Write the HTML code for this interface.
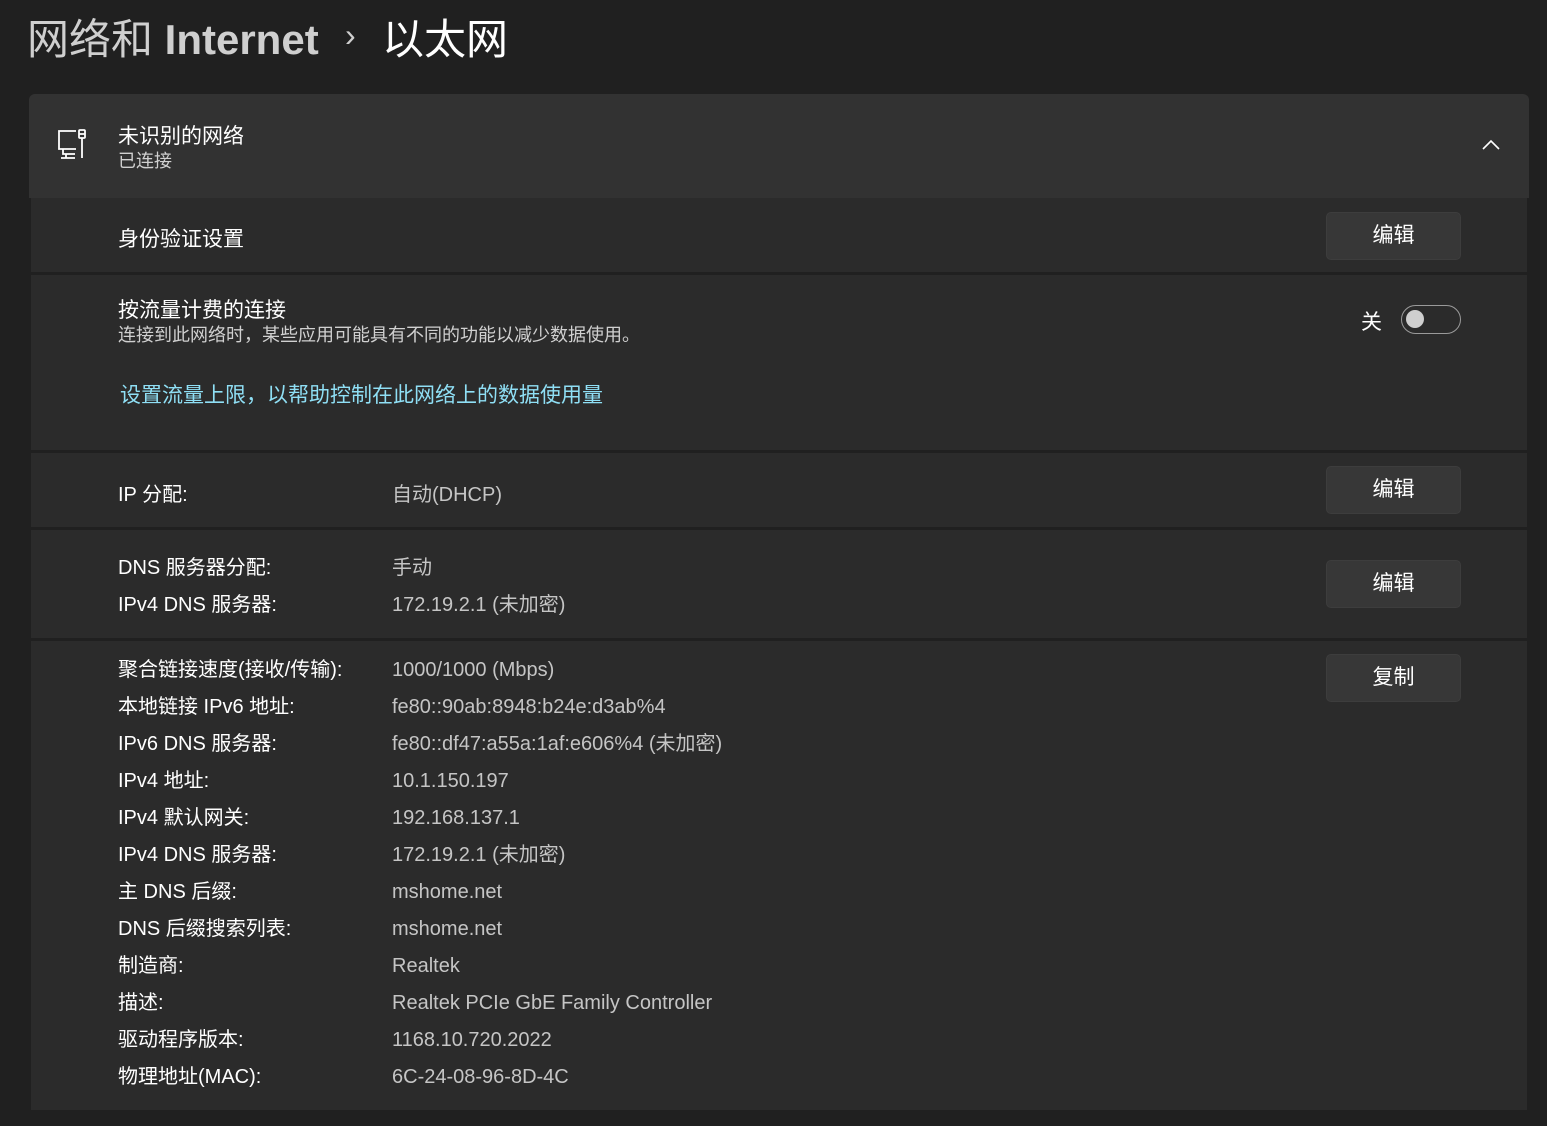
<!DOCTYPE html>
<html><head><meta charset="utf-8"><style>
*{margin:0;padding:0;box-sizing:border-box}
body{width:1547px;height:1126px;background:#202020;font-family:"Liberation Sans","Noto Sans CJK SC",sans-serif;color:#fff;position:relative;overflow:hidden}
.a{position:absolute;white-space:nowrap}
.sec{position:absolute;left:31px;width:1496px;background:#2b2b2b}
.btn{position:absolute;left:1326px;width:135px;height:48px;background:#373737;border:1px solid #3d3d3d;border-radius:5px;font-size:21px;text-align:center;line-height:46px}
.l{font-size:20px;color:#fff}
.v{font-size:20px;color:#c5c5c5}
.c{font-size:21px}
</style></head><body>
<div class="a" style="left:27px;top:14px;font-size:42px;color:#cfcfcf;line-height:52px">网络和 <span style="font-weight:bold">Internet</span></div>
<div class="a" style="left:345px;top:17px;font-size:32px;color:#cfcfcf">›</div>
<div class="a" style="left:382px;top:14px;font-size:42px;color:#fff;line-height:52px">以太网</div>

<div class="a" style="left:29px;top:94px;width:1500px;height:104px;background:#323232;border-radius:6px 6px 0 0"></div>
<svg class="a" style="left:56px;top:128px" width="34" height="34" viewBox="0 0 34 34" fill="none" stroke="#fff" stroke-width="1.8"><path d="M20 3H3v18h17"/><path d="M7 21v5h12M5 30h14M10 26v4"/><rect x="23" y="2" width="6" height="8" rx="1"/><path d="M23 6h6M26 10v20"/></svg>
<div class="a c" style="left:118px;top:120px">未识别的网络</div>
<div class="a" style="left:118px;top:147px;font-size:18px;color:#d0d0d0">已连接</div>
<svg class="a" style="left:1482px;top:139px" width="18" height="12" viewBox="0 0 18 12" fill="none" stroke="#fff" stroke-width="1.6"><path d="M1 10L9 2l8 8"/></svg>

<div class="sec" style="top:198px;height:74px"></div>
<div class="a c" style="left:118px;top:223px">身份验证设置</div>
<div class="btn" style="top:212px">编辑</div>

<div class="sec" style="top:275px;height:175px"></div>
<div class="a c" style="left:118px;top:294px">按流量计费的连接</div>
<div class="a" style="left:118px;top:321px;font-size:18px;color:#d0d0d0">连接到此网络时，某些应用可能具有不同的功能以减少数据使用。</div>
<div class="a" style="left:120px;top:379px;font-size:21px;color:#8fdff5">设置流量上限，以帮助控制在此网络上的数据使用量</div>
<div class="a c" style="left:1361px;top:306px">关</div>
<div class="a" style="left:1401px;top:305px;width:60px;height:29px;border:1.5px solid #9a9a9a;border-radius:15px"></div>
<div class="a" style="left:1406px;top:310px;width:18px;height:18px;border-radius:50%;background:#cfcfcf"></div>

<div class="sec" style="top:453px;height:74px"></div>
<div class="a l" style="left:118px;top:478px">IP 分配:</div>
<div class="a v" style="left:392px;top:478px">自动(DHCP)</div>
<div class="btn" style="top:466px">编辑</div>

<div class="sec" style="top:530px;height:108px"></div>
<div class="a l" style="left:118px;top:556px;line-height:24px">DNS 服务器分配:</div>
<div class="a v" style="left:392px;top:556px;line-height:24px">手动</div>
<div class="a l" style="left:118px;top:593px;line-height:24px">IPv4 DNS 服务器:</div>
<div class="a v" style="left:392px;top:593px;line-height:24px">172.19.2.1 (未加密)</div>
<div class="btn" style="top:560px">编辑</div>

<div class="sec" style="top:641px;height:469px"></div>
<div class="a l" style="left:118px;top:652px;line-height:37px">聚合链接速度(接收/传输):<br>本地链接 IPv6 地址:<br>IPv6 DNS 服务器:<br>IPv4 地址:<br>IPv4 默认网关:<br>IPv4 DNS 服务器:<br>主 DNS 后缀:<br>DNS 后缀搜索列表:<br>制造商:<br>描述:<br>驱动程序版本:<br>物理地址(MAC):</div>
<div class="a v" style="left:392px;top:652px;line-height:37px">1000/1000 (Mbps)<br>fe80::90ab:8948:b24e:d3ab%4<br>fe80::df47:a55a:1af:e606%4 (未加密)<br>10.1.150.197<br>192.168.137.1<br>172.19.2.1 (未加密)<br>mshome.net<br>mshome.net<br>Realtek<br>Realtek PCIe GbE Family Controller<br>1168.10.720.2022<br>6C-24-08-96-8D-4C</div>
<div class="btn" style="top:654px">复制</div>
</body></html>
